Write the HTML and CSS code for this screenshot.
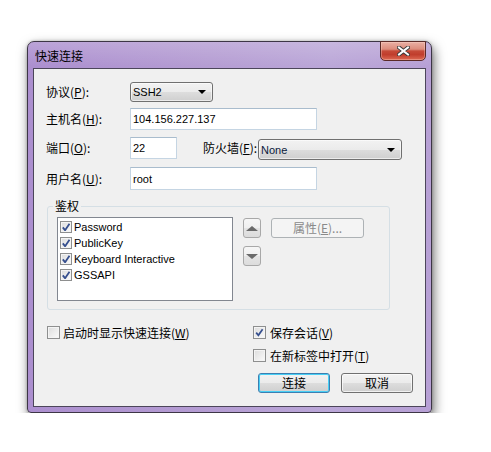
FILE: index.html
```html
<!DOCTYPE html>
<html lang="zh">

<head>
    <meta charset="UTF-8">
    <title>快速连接</title>
    <link rel="stylesheet" href="styles.css">
</head>

<body>
    <div class="window">
        <div class="titlebar">
            <span class="title">快速连接</span>
            <div class="close">
                <svg width="13" height="10" viewBox="0 0 13 10">
                    <path d="M2 1.5 L11 8.5 M11 1.5 L2 8.5" stroke="#3a3a3a" stroke-width="4" stroke-linecap="round" />
                    <path d="M2 1.5 L11 8.5 M11 1.5 L2 8.5" stroke="#ffffff" stroke-width="2" stroke-linecap="square" />
                </svg>
            </div>
        </div>

        <div class="client">
            <!-- 连接参数 -->
            <div class="form-row row-proto">
                <span class="lbl">协议(<u>P</u>):</span>
                <div class="combo combo-proto">
                    <span class="val">SSH2</span>
                    <i class="combo-arrow"></i>
                </div>
            </div>

            <div class="form-row row-host">
                <span class="lbl">主机名(<u>H</u>):</span>
                <div class="field field-host"><span class="val">104.156.227.137</span></div>
            </div>

            <div class="form-row row-port">
                <span class="lbl">端口(<u>O</u>):</span>
                <div class="field field-port"><span class="val">22</span></div>
                <span class="lbl-fw">防火墙(<u>F</u>):</span>
                <div class="combo combo-fw">
                    <span class="val">None</span>
                    <i class="combo-arrow"></i>
                </div>
            </div>

            <div class="form-row row-user">
                <span class="lbl">用户名(<u>U</u>):</span>
                <div class="field field-user"><span class="val">root</span></div>
            </div>

            <!-- 鉴权 -->
            <div class="group">
                <span class="group-title">鉴权</span>
                <div class="listbox">
                    <div class="item"><i class="check small on"></i><span class="val">Password</span></div>
                    <div class="item"><i class="check small on"></i><span class="val">PublicKey</span></div>
                    <div class="item"><i class="check small on"></i><span class="val">Keyboard Interactive</span></div>
                    <div class="item"><i class="check small on"></i><span class="val">GSSAPI</span></div>
                </div>
                <div class="order-btns">
                    <div class="btn-sq"><i class="tri-up"></i></div>
                    <div class="btn-sq"><i class="tri-down"></i></div>
                </div>
                <div class="btn btn-disabled btn-props">属性(<u>E</u>)...</div>
            </div>

            <!-- 选项 -->
            <div class="options">
                <div class="opt opt-startup"><i class="check"></i><span>启动时显示快速连接(<u>W</u>)</span></div>
                <div class="opt"><i class="check on"></i><span>保存会话(<u>V</u>)</span></div>
                <div></div>
                <div class="opt"><i class="check"></i><span>在新标签中打开(<u>T</u>)</span></div>
                <div></div>
                <div class="actions">
                    <div class="btn btn-default">连接</div>
                    <div class="btn">取消</div>
                </div>
            </div>
        </div>
    </div>
</body>

</html>
```

FILE: styles.css
```css
body {
    margin: 0;
    background-color: #fff;
    font-family: "Noto Sans CJK SC", sans-serif;
    font-size: 12px;
    line-height: 14px;
    color: #000;
}

u {
    text-decoration: underline;
    text-underline-offset: 1px;
}

.val {
    font-family: "Liberation Sans", Arial, sans-serif;
    font-size: 11px;
}

/* 窗口外框 */
.window {
    width: 405px;
    height: 372px;
    box-sizing: border-box;
    margin: 41px 0 0 27px;
    padding: 0 5px 5px;
    border: 1px solid #3d3646;
    border-radius: 7px 7px 4px 4px;
    background:
        linear-gradient(180deg, rgba(255, 255, 255, 0.18), rgba(255, 255, 255, 0) 24px),
        linear-gradient(90deg, #ac8fcf, #b59dd3 45%, #bba7d8 75%, #b7a0d5);
    box-shadow: 2px 5px 12px rgba(0, 0, 0, 0.55), 0 0 3px rgba(0, 0, 0, 0.25);
    display: flex;
    flex-direction: column;
}

.titlebar {
    height: 26px;
    display: flex;
    align-items: center;
    justify-content: space-between;
    padding-left: 2px;
}

.title {
    margin-top: 1px;
}

.close {
    align-self: flex-start;
    width: 46px;
    height: 20px;
    margin-top: -1px;
    box-sizing: border-box;
    border: 1px solid #5b2a27;
    border-radius: 0 0 5px 5px;
    background: linear-gradient(180deg, #eab0a4, #dc8c7c 40%, #c64a38 50%, #c03d2c 70%, #dd6a54);
    display: flex;
    align-items: center;
    justify-content: center;
    box-shadow: inset 0 0 0 1px rgba(255, 220, 210, 0.35);
}

.client {
    flex: 1;
    background-color: #f0f0f0;
    border: 1px solid #4c465a;
    padding: 13px 0 0 12px;
}

/* 表单行 */
.form-row {
    display: flex;
    align-items: center;
}

.lbl {
    width: 84px;
}

.row-proto {
    height: 20px;
}

.row-host {
    height: 22px;
    margin-top: 6px;
}

.row-port {
    height: 22px;
    margin-top: 7px;
    align-items: flex-start;
}

.row-port .lbl,
.row-port .lbl-fw {
    align-self: center;
}

.row-user {
    height: 23px;
    margin-top: 8px;
}

.field {
    box-sizing: border-box;
    height: 100%;
    background-color: #fff;
    border: 1px solid #c5d5e3;
    border-top-color: #a9bccd;
    padding-left: 2px;
    display: flex;
    align-items: center;
}

.field-host,
.field-user {
    width: 187px;
}

.field-port {
    width: 47px;
}

.lbl-fw {
    margin-left: 26px;
    width: 55px;
}

.combo {
    box-sizing: border-box;
    height: 20px;
    border: 1px solid #707070;
    border-radius: 3px;
    background: linear-gradient(180deg, #f2f2f2, #ebebeb 50%, #dddddd 51%, #cfcfcf);
    box-shadow: inset 0 0 0 1px rgba(255, 255, 255, 0.6);
    display: flex;
    align-items: center;
    justify-content: space-between;
    padding: 0 6px 0 2px;
}

.combo-proto {
    width: 83px;
}

.combo-fw {
    width: 144px;
    height: 21px;
    margin-top: 2px;
}

.combo-fw .val {
    color: #0a1a3c;
}

.combo-arrow {
    width: 0;
    height: 0;
    border-left: 4px solid transparent;
    border-right: 4px solid transparent;
    border-top: 4px solid #000;
}

/* 鉴权分组 */
.group {
    position: relative;
    width: 343px;
    height: 104px;
    box-sizing: border-box;
    margin: 16px 0 0 1px;
    padding: 10px 0 0 9px;
    border: 1px solid #d5dfe5;
    border-radius: 3px;
    display: flex;
    align-items: flex-start;
}

.group-title {
    position: absolute;
    top: -8px;
    left: 5px;
    padding: 0 2px;
    background-color: #f0f0f0;
}

.listbox {
    width: 176px;
    height: 84px;
    box-sizing: border-box;
    border: 1px solid #828790;
    background-color: #fff;
    padding-top: 1px;
}

.item {
    height: 16px;
    display: flex;
    align-items: center;
    padding-left: 2px;
    gap: 2px;
}

.order-btns {
    margin: 1px 0 0 10px;
    display: flex;
    flex-direction: column;
    gap: 8px;
}

.btn-sq {
    width: 18px;
    height: 20px;
    box-sizing: border-box;
    border: 1px solid #a8a8a8;
    border-radius: 3px;
    background: linear-gradient(180deg, #f6f6f6, #efefef 50%, #e4e4e4 51%, #dcdcdc);
    display: flex;
    align-items: center;
    justify-content: center;
}

.tri-up,
.tri-down {
    width: 0;
    height: 0;
    border-left: 6px solid transparent;
    border-right: 6px solid transparent;
}

.tri-up {
    border-bottom: 5px solid #6a6a6a;
}

.tri-down {
    border-top: 5px solid #6a6a6a;
}

/* 按钮 */
.btn {
    width: 72px;
    height: 20px;
    box-sizing: border-box;
    border: 1px solid #707070;
    border-radius: 3px;
    background: linear-gradient(180deg, #f2f2f2, #ebebeb 50%, #dddddd 51%, #cfcfcf);
    box-shadow: inset 0 0 0 1px rgba(255, 255, 255, 0.7);
    display: flex;
    align-items: center;
    justify-content: center;
}

.btn-props {
    width: 93px;
    margin: 1px 0 0 10px;
}

.btn-disabled {
    color: #8a8a8a;
    border-color: #adb2b5;
    background: #f4f4f4;
    box-shadow: none;
}

.btn-default {
    border-color: #3c7fb1;
    box-shadow: inset 0 0 0 1px #48cff5;
}

/* 复选框 */
.check {
    width: 13px;
    height: 13px;
    box-sizing: border-box;
    border: 1px solid #8e8f8f;
    background: linear-gradient(135deg, #dcdcdc, #fbfbfb);
    box-shadow: inset 0 0 0 1px #f4f4f4;
    flex: none;
}

.check.small {
    width: 12px;
    height: 12px;
}

.check.on {
    background:
        url("data:image/svg+xml,%3Csvg xmlns='http://www.w3.org/2000/svg' width='11' height='11'%3E%3Cpath d='M2.2 5.6 L4.4 8.3 L8.6 2.2' fill='none' stroke='%23364f8e' stroke-width='1.7'/%3E%3C/svg%3E") center / 11px 11px no-repeat,
        linear-gradient(135deg, #dcdcdc, #fbfbfb);
}

/* 底部选项 */
.options {
    margin-top: 16px;
    display: grid;
    grid-template-columns: 207px 160px;
    row-gap: 10px;
}

.opt {
    height: 13px;
    display: flex;
    align-items: center;
    gap: 4px;
}

.opt-startup {
    margin-left: 1px;
    gap: 3px;
}

.actions {
    margin: 1px 0 0 5px;
    display: flex;
    gap: 11px;
}
```
